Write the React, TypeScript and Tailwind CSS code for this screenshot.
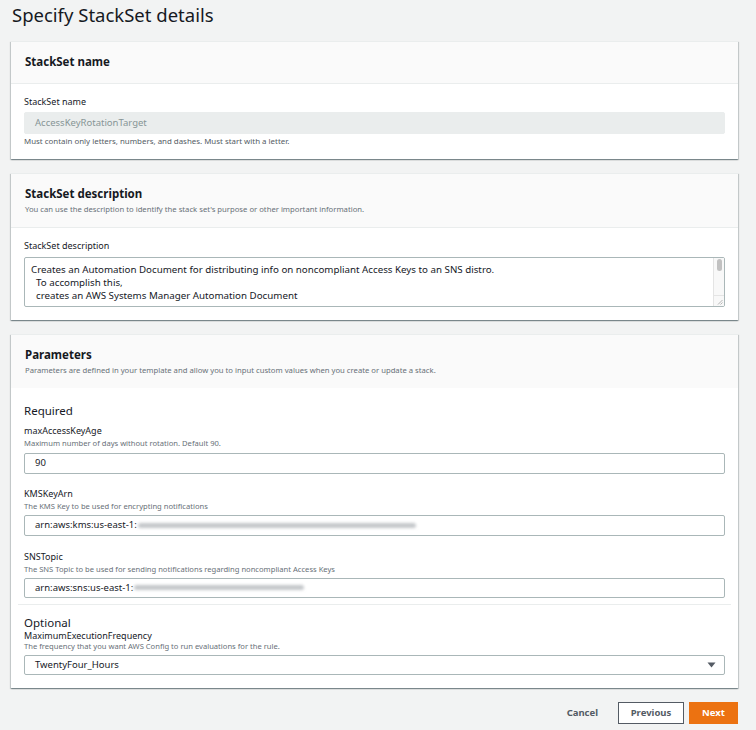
import React from 'react';

const font = { fontFamily: '"Noto Sans", "Open Sans", Arial, sans-serif' };

const Card: React.FC<{ title: string; subtitle?: string; children: React.ReactNode; line?: boolean }> = ({
  title,
  subtitle,
  children,
  line = true,
}) => (
  <div className="bg-white border-t border-[#eaeded] shadow-[0_1px_1px_0_rgba(0,28,36,0.3),1px_1px_1px_0_rgba(0,28,36,0.15),-1px_1px_1px_0_rgba(0,28,36,0.15)]">
    <div className={`bg-[#fafafa] px-[14px] pt-[11px] pb-[12px] ${line ? 'border-b border-[#eaeded]' : ''}`}>
      <h2 className="text-[11.5px] leading-[18px] font-bold text-[#16191f]">{title}</h2>
      {subtitle && <p className="text-[7.7px] leading-[12px] text-[#687078]">{subtitle}</p>}
    </div>
    {children}
  </div>
);

const Label: React.FC<{ children: React.ReactNode }> = ({ children }) => (
  <div className="text-[9px] leading-[14px] text-[#16191f]">{children}</div>
);

const Hint: React.FC<{ children: React.ReactNode }> = ({ children }) => (
  <div className="text-[7.6px] leading-[11px] text-[#687078]">{children}</div>
);

const Redacted: React.FC<{ width: number }> = ({ width }) => (
  <span className="relative inline-block h-[8px] align-middle ml-[1px]" style={{ width }}>
    <span className="absolute inset-x-0 top-[1px] h-[5px] rounded-full bg-[#c4c7ca] blur-[1.5px]" />
  </span>
);

export default function App() {
  return (
    <div style={font} className="min-h-[730px] bg-[#f2f3f3] px-[11px] pt-[1px] text-[#16191f]">
      <h1 className="text-[18.5px] leading-[28px] font-normal text-[#16191f] pl-[1px]">Specify StackSet details</h1>

      <div className="mt-[12px] mr-[7px] flex flex-col gap-[14px]">
        <Card title="StackSet name">
          <div className="px-[13px] pt-[11px] pb-[12px]">
            <Label>StackSet name</Label>
            <div className="mt-[3px] h-[22px] rounded-[2px] border border-[#eaeded] bg-[#eaeded] px-[10px] flex items-center text-[9.5px] text-[#879596]">
              AccessKeyRotationTarget
            </div>
            <div className="mt-[1px] text-[7.9px] leading-[12px] text-[#545b64]">
              Must contain only letters, numbers, and dashes. Must start with a letter.
            </div>
          </div>
        </Card>

        <Card
          title="StackSet description"
          subtitle="You can use the description to identify the stack set's purpose or other important information."
        >
          <div className="px-[13px] pt-[11px] pb-[13px]">
            <Label>StackSet description</Label>
            <div className="mt-[4px] h-[50px] rounded-[2px] border border-[#aab7b8] bg-white flex">
              <div className="flex-1 pl-[6px] pt-[5px] text-[9.75px] leading-[13px] text-[#16191f] whitespace-pre">
                {'Creates an Automation Document for distributing info on noncompliant Access Keys to an SNS distro.\n  To accomplish this,\n  creates an AWS Systems Manager Automation Document'}
              </div>
              <div className="w-[11px] border-l border-[#e4e4e4] bg-[#f8f8f8] flex flex-col">
                <div className="mx-auto mt-[1px] h-[12px] w-[5px] rounded-full bg-[#c1c1c1]" />
                <div className="mt-auto h-[11px] border-t border-[#e4e4e4] relative">
                  <svg className="absolute right-[1px] bottom-[1px]" width="6" height="6" viewBox="0 0 6 6">
                    <path d="M1 5.5L5.5 1M3.5 5.5L5.5 3.5" stroke="#999" strokeWidth="0.7" />
                  </svg>
                </div>
              </div>
            </div>
          </div>
        </Card>

        <Card
          title="Parameters"
          subtitle="Parameters are defined in your template and allow you to input custom values when you create or update a stack."
          line={false}
        >
          <div className="px-[13px] pt-[14px] pb-[13px]">
            <div className="text-[11.5px] leading-[18px] text-[#16191f]">Required</div>

            <div className="mt-[4px]">
              <Label>maxAccessKeyAge</Label>
              <Hint>Maximum number of days without rotation. Default 90.</Hint>
              <div className="mt-[4px] h-[21px] rounded-[2px] border border-[#aab7b8] bg-white px-[10px] flex items-center text-[9.5px]">
                90
              </div>
            </div>

            <div className="mt-[13px]">
              <Label>KMSKeyArn</Label>
              <Hint>The KMS Key to be used for encrypting notifications</Hint>
              <div className="mt-[3px] h-[21px] rounded-[2px] border border-[#aab7b8] bg-white px-[10px] flex items-center text-[9.5px]">
                arn:aws:kms:us-east-1:
                <Redacted width={278} />
              </div>
            </div>

            <div className="mt-[14px]">
              <Label>SNSTopic</Label>
              <Hint>The SNS Topic to be used for sending notifications regarding noncompliant Access Keys</Hint>
              <div className="mt-[3px] h-[20px] rounded-[2px] border border-[#aab7b8] bg-white px-[10px] flex items-center text-[9.5px]">
                arn:aws:sns:us-east-1:
                <Redacted width={170} />
              </div>
            </div>

            <div className="mt-[6px] -mx-[6px] border-t border-[#eaeded]" />

            <div className="mt-[11px] text-[11.5px] leading-[14px] text-[#16191f]">Optional</div>
            <div className="text-[9px] leading-[11px] text-[#16191f]">MaximumExecutionFrequency</div>
            <Hint>The frequency that you want AWS Config to run evaluations for the rule.</Hint>
            <div className="mt-[3px] h-[20px] rounded-[2px] border border-[#aab7b8] bg-white pl-[10px] pr-[8px] flex items-center justify-between text-[9.5px]">
              <span>TwentyFour_Hours</span>
              <svg width="9" height="6" viewBox="0 0 9 6">
                <path d="M0.5 0.5h8L4.5 5.5z" fill="#545b64" />
              </svg>
            </div>
          </div>
        </Card>
      </div>

      <div className="mt-[14px] mr-[7px] flex items-center justify-end">
        <button className="mr-[20px] text-[9.5px] font-bold text-[#545b64]">Cancel</button>
        <button className="h-[22px] w-[66px] border border-[#545b64] bg-white text-[9.5px] font-bold text-[#545b64]">
          Previous
        </button>
        <button className="ml-[5px] h-[22px] w-[49px] bg-[#ec7211] text-[9.5px] font-bold text-white">Next</button>
      </div>
    </div>
  );
}
